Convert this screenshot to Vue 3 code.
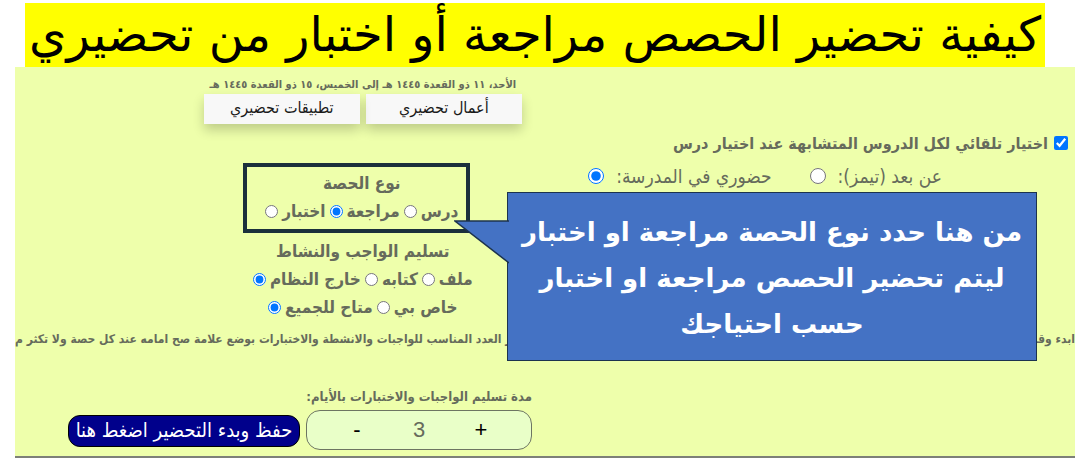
<template>
  <div class="page" dir="rtl" lang="ar">
    <h1 class="title"><mark>كيفية تحضير الحصص مراجعة أو اختبار من تحضيري</mark></h1>

    <main class="panel">
      <div class="columns">
        <section class="options">
          <label class="auto_select">
            <input v-model="autoSelect" type="checkbox" />
            <span>اختيار تلقائي لكل الدروس المتشابهة عند اختيار درس</span>
          </label>
          <div class="place">
            <label v-for="item in places" :key="item.value">
              <span>{{ item.text }}</span>
              <input v-model="place" type="radio" name="place" :value="item.value" />
            </label>
          </div>
        </section>

        <section class="settings">
          <p class="date">الأحد، ١١ ذو القعدة ١٤٤٥ هـ إلى الخميس، ١٥ ذو القعدة ١٤٤٥ هـ</p>
          <nav class="links">
            <button type="button">أعمال تحضيري</button>
            <button type="button">تطبيقات تحضيري</button>
          </nav>

          <div class="lesson_type">
            <h2>نوع الحصة</h2>
            <div class="radios">
              <label v-for="item in lessonTypes" :key="item">
                <span>{{ item }}</span>
                <input v-model="lessonType" type="radio" name="lesson" :value="item" />
              </label>
            </div>
          </div>

          <div class="delivery">
            <h2>تسليم الواجب والنشاط</h2>
            <div class="radios">
              <label v-for="item in deliveries" :key="item">
                <span>{{ item }}</span>
                <input v-model="delivery" type="radio" name="delivery" :value="item" />
              </label>
            </div>
            <div class="radios">
              <label v-for="item in audiences" :key="item">
                <span>{{ item }}</span>
                <input v-model="audience" type="radio" name="audience" :value="item" />
              </label>
            </div>
          </div>
        </section>
      </div>

      <p class="notice">
        <span>ابدء وقم</span>
        <span>تر العدد المناسب للواجبات والانشطة والاختبارات بوضع علامة صح امامه عند كل حصة ولا تكثر م</span>
      </p>

      <div class="footer">
        <div class="duration">
          <label for="days">مدة تسليم الواجبات والاختبارات بالأيام:</label>
          <div class="stepper">
            <button type="button" aria-label="زيادة" @click="days++">+</button>
            <input id="days" v-model.number="days" type="text" inputmode="numeric" />
            <button type="button" aria-label="إنقاص" @click="days--">-</button>
          </div>
        </div>
        <button type="button" class="btn_save">حفظ وبدء التحضير اضغط هنا</button>
      </div>

      <aside class="callout">
        <svg class="tail" viewBox="0 0 55 44" aria-hidden="true">
          <path d="M55 1H1L55 43" fill="#4472c4" stroke="#1c334e" stroke-width="1.5" />
        </svg>
        <p>
          من هنا حدد نوع الحصة مراجعة او اختبار<br />
          ليتم تحضير الحصص مراجعة او اختبار<br />
          حسب احتياجك
        </p>
      </aside>
    </main>
  </div>
</template>

<script setup>
import { ref } from 'vue';

const places = [
  { value: 'remote', text: 'عن بعد (تيمز):' },
  { value: 'school', text: 'حضوري في المدرسة:' }
];
const lessonTypes = ['درس', 'مراجعة', 'اختبار'];
const deliveries = ['ملف', 'كتابه', 'خارج النظام'];
const audiences = ['خاص بي', 'متاح للجميع'];

const autoSelect = ref(true);
const place = ref('school');
const lessonType = ref('مراجعة');
const delivery = ref('خارج النظام');
const audience = ref('متاح للجميع');
const days = ref(3);
</script>

<style>
body {
  margin: 0;
  background: #fff;
}
</style>

<style scoped>
* {
  box-sizing: border-box;
}

.page {
  padding: 3px 12px 4px 15px;
  font-family: "DejaVu Sans Condensed", "DejaVu Sans", sans-serif;
  color: #666b5c;
}

h1, h2, p {
  margin: 0;
}

button, input {
  font-family: inherit;
}

input[type="radio"],
input[type="checkbox"] {
  flex: none;
  width: 13px;
  height: 13px;
  margin: 0;
}

.title {
  padding-right: 20px;
  font-family: "DejaVu Sans", sans-serif;
  font-size: 48px;
  font-weight: 400;
  line-height: 64px;
  text-align: center;
  white-space: nowrap;
}

.title mark {
  display: inline-block;
  height: 64px;
  padding: 0 4px;
  background: #ff0;
  color: #000;
  line-height: 62px;
  vertical-align: top;
}

.panel {
  position: relative;
  background: #eeffab;
  border-bottom: 2px solid #7d8078;
}

.columns {
  display: grid;
  grid-template-columns: 48% 38%;
}

.options {
  padding: 62px 7px 0 0;
}

.auto_select {
  display: flex;
  align-items: center;
  gap: 6px;
  height: 28px;
  font-size: 16px;
  font-weight: 700;
  white-space: nowrap;
}

.auto_select input {
  width: 14px;
  height: 14px;
}

.place {
  display: flex;
  gap: 38px;
  padding-right: 126px;
  margin-top: 5px;
}

.place label {
  display: flex;
  align-items: center;
  gap: 12px;
  height: 28px;
  font-size: 19px;
  white-space: nowrap;
}

.place input {
  width: 16px;
  height: 16px;
}

.settings {
  display: flex;
  flex-direction: column;
  align-items: center;
  padding: 8px 4px 0 0;
}

.date {
  font-size: 11px;
  font-weight: 700;
  line-height: 19px;
  white-space: nowrap;
}

.links {
  display: flex;
  gap: 6px;
}

.links button {
  width: 156px;
  height: 30px;
  padding: 0 0 4px;
  border: 0;
  background: #f8f8f8;
  color: #1a1a1a;
  font-size: 16px;
  box-shadow: 0 6px 12px rgba(0, 0, 0, .2);
}

h2, .radios {
  font-size: 17px;
  font-weight: 700;
  line-height: 28px;
  text-align: center;
  white-space: nowrap;
}

.radios {
  display: flex;
  justify-content: center;
  gap: 4px;
}

.radios label {
  display: flex;
  align-items: center;
  gap: 4px;
}

.lesson_type {
  margin: 39px 12px 4px 0;
  padding: 2px 4px 4px 14px;
  min-width: 227px;
  border: 4px solid #1b303c;
}

.notice {
  display: flex;
  justify-content: space-between;
  margin-top: 8px;
  overflow: hidden;
  font-size: 12px;
  font-weight: 700;
  line-height: 20px;
  white-space: nowrap;
}

.footer {
  display: flex;
  justify-content: flex-end;
  align-items: flex-end;
  gap: 6px;
  margin-top: 38px;
  padding: 0 0 6px 5%;
}

.duration label {
  display: block;
  margin-bottom: 3px;
  font-size: 13px;
  font-weight: 700;
  line-height: 20px;
  white-space: nowrap;
}

.stepper {
  display: flex;
  align-items: center;
  justify-content: center;
  width: 226px;
  height: 40px;
  border: 1px solid #6d7562;
  border-radius: 14px;
  background: #e9ffc8;
}

.stepper button {
  width: 44px;
  height: 36px;
  padding: 0;
  border: 0;
  background: none;
  color: #000;
  font-family: "Liberation Sans", Arial, sans-serif;
  font-size: 22px;
}

.stepper input {
  width: 80px;
  padding: 0;
  border: 0;
  background: none;
  color: #666b5c;
  font-family: "Liberation Sans", Arial, sans-serif;
  font-size: 22px;
  text-align: center;
}

.btn_save {
  width: 232px;
  height: 32px;
  margin-bottom: 3px;
  padding: 0 0 3px;
  border: 1px solid #000;
  border-radius: 12px;
  background: #00008b;
  color: #fff;
  font-size: 20px;
  line-height: 26px;
  white-space: nowrap;
}

.callout {
  position: absolute;
  top: 125px;
  right: 38px;
  width: 50%;
  height: 169px;
  padding-top: 16px;
  border: 1px solid #1c334e;
  background: #4472c4;
  color: #fff;
  font-family: "DejaVu Sans", sans-serif;
  font-size: 26px;
  font-weight: 700;
  line-height: 46px;
  text-align: center;
  white-space: nowrap;
}

.tail {
  position: absolute;
  top: 27px;
  right: 100%;
  width: 55px;
  height: 44px;
  margin-right: -1px;
}
</style>
